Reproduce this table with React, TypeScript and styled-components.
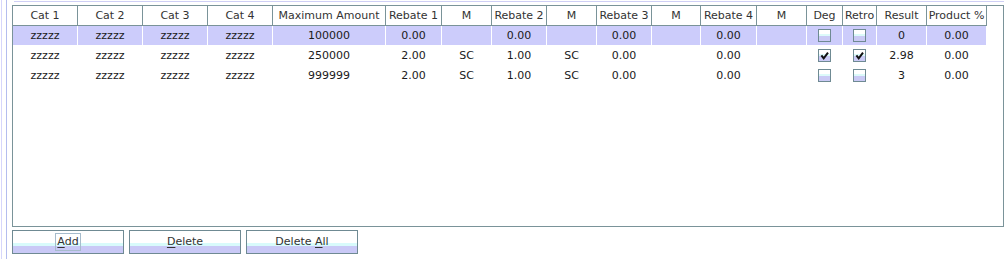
import React from 'react'
import styled, { createGlobalStyle } from 'styled-components'

const GlobalStyle = createGlobalStyle`
  html, body {
    margin: 0;
    padding: 0;
    background: #ffffff;
  }
  body {
    font-family: "DejaVu Sans", "Liberation Sans", sans-serif;
    font-size: 11px;
    color: #222;
  }
`

// 列宽（含右侧网格线）
const COLUMNS = [65, 65, 65, 65, 113, 56, 50, 55, 50, 55, 49, 56, 50, 36, 34, 50, 60]
const COLS = COLUMNS.map((w) => `${w}px`).join(' ')

const HEADERS = [
  'Cat 1', 'Cat 2', 'Cat 3', 'Cat 4', 'Maximum Amount', 'Rebate 1', 'M', 'Rebate 2', 'M',
  'Rebate 3', 'M', 'Rebate 4', 'M', 'Deg', 'Retro', 'Result', 'Product %',
]

type RowData = {
  cats: string[]
  amount: string
  rebates: [string, string][]
  deg: boolean
  retro: boolean
  result: string
  product: string
  selected?: boolean
}

const rows: RowData[] = [
  {
    cats: ['zzzzz', 'zzzzz', 'zzzzz', 'zzzzz'],
    amount: '100000',
    rebates: [['0.00', ''], ['0.00', ''], ['0.00', ''], ['0.00', '']],
    deg: false,
    retro: false,
    result: '0',
    product: '0.00',
    selected: true,
  },
  {
    cats: ['zzzzz', 'zzzzz', 'zzzzz', 'zzzzz'],
    amount: '250000',
    rebates: [['2.00', 'SC'], ['1.00', 'SC'], ['0.00', ''], ['0.00', '']],
    deg: true,
    retro: true,
    result: '2.98',
    product: '0.00',
  },
  {
    cats: ['zzzzz', 'zzzzz', 'zzzzz', 'zzzzz'],
    amount: '999999',
    rebates: [['2.00', 'SC'], ['1.00', 'SC'], ['0.00', ''], ['0.00', '']],
    deg: false,
    retro: false,
    result: '3',
    product: '0.00',
  },
]

const Frame = styled.div`
  display: flex;
  height: 100vh;
`

const Rail = styled.div`
  margin-left: 1px;
  width: 4px;
  border-left: 1px solid #d6d6fb;
  border-right: 1px solid #b4bdee;
`

const Content = styled.div`
  display: flex;
  flex-direction: column;
  padding-left: 5px;
`

const TopRule = styled.div`
  margin: 1px 0 0 2px;
  width: 990px;
  border-top: 1px solid #cfcff5;
`

const ScrollPane = styled.div`
  margin-top: 3px;
  width: 992px;
  height: 222px;
  box-sizing: border-box;
  border: 1px solid #7a9399;
  background: #fff;
  overflow: hidden;
`

const HeaderRow = styled.div`
  display: grid;
  grid-template-columns: ${COLS};
  width: max-content;
  height: 20px;
`

const HeaderCell = styled.div`
  box-sizing: border-box;
  display: flex;
  align-items: center;
  justify-content: center;
  border-right: 1px solid #7a9399;
  border-bottom: 1px solid #7a9399;
  color: #333;
  white-space: nowrap;
  overflow: hidden;
`

const Row = styled.div<{ $selected?: boolean }>`
  display: grid;
  grid-template-columns: ${COLS};
  width: max-content;
  height: 20px;
  background: ${(p) => (p.$selected ? '#ccccfb' : '#ffffff')};
`

const Cell = styled.div`
  box-sizing: border-box;
  display: flex;
  align-items: center;
  justify-content: center;
  border-right: 1px solid #ffffff;
  border-bottom: 1px solid #ffffff;
  color: #1a1a1a;
  white-space: nowrap;
`

const Box = styled.span`
  box-sizing: border-box;
  width: 13px;
  height: 13px;
  border: 1px solid #6f8a93;
  background: linear-gradient(
    to bottom,
    #ffffff 0,
    #ffffff 4px,
    #dcfafa 4px,
    #dcfafa 6px,
    #cacaf5 6px
  );
  display: flex;
  align-items: center;
  justify-content: center;
`

const ButtonBar = styled.div`
  display: flex;
  gap: 5px;
  margin-top: 3px;
`

const Button = styled.button`
  box-sizing: border-box;
  width: 112px;
  height: 24px;
  padding: 0 0 1px;
  border: 1px solid #6f8a93;
  border-radius: 0;
  background: linear-gradient(
    to bottom,
    #ffffff 0,
    #ffffff 12px,
    #d8fbfb 12px,
    #d8fbfb 15px,
    #c9c9f6 15px
  );
  font-family: "DejaVu Sans", "Liberation Sans", sans-serif;
  font-size: 11px;
  color: #333;
  display: flex;
  align-items: center;
  justify-content: center;
`

const Label = styled.span<{ $focused?: boolean }>`
  white-space: pre;
  border: 1px solid ${(p) => (p.$focused ? '#a6bccc' : 'transparent')};
  padding: 1px 1px 2px;
`

const Mnemonic = styled.span`
  text-decoration: underline;
  text-underline-offset: 2px;
`

function CheckBox({ checked }: { checked: boolean }) {
  return (
    <Box>
      {checked && (
        <svg width="11" height="11" viewBox="0 0 11 11">
          <path d="M3 6.2 L4.7 8.4 L8.4 3.4" fill="none" stroke="#111" strokeWidth="2" strokeLinecap="square" />
        </svg>
      )}
    </Box>
  )
}

function RebateTable() {
  return (
    <ScrollPane>
      <HeaderRow>
        {HEADERS.map((h, i) => (
          <HeaderCell key={i}>{h}</HeaderCell>
        ))}
      </HeaderRow>
      {rows.map((r, i) => (
        <Row key={i} $selected={r.selected}>
          {r.cats.map((c, j) => (
            <Cell key={'c' + j}>{c}</Cell>
          ))}
          <Cell>{r.amount}</Cell>
          {r.rebates.map(([v, m], j) => (
            <React.Fragment key={'r' + j}>
              <Cell>{v}</Cell>
              <Cell>{m}</Cell>
            </React.Fragment>
          ))}
          <Cell>
            <CheckBox checked={r.deg} />
          </Cell>
          <Cell>
            <CheckBox checked={r.retro} />
          </Cell>
          <Cell>{r.result}</Cell>
          <Cell>{r.product}</Cell>
        </Row>
      ))}
    </ScrollPane>
  )
}

export default function App() {
  return (
    <>
      <GlobalStyle />
      <Frame>
        <Rail />
        <Content>
          <TopRule />
          <RebateTable />
          <ButtonBar>
            <Button>
              <Label $focused>
                <Mnemonic>A</Mnemonic>dd
              </Label>
            </Button>
            <Button>
              <Label>
                <Mnemonic>D</Mnemonic>elete
              </Label>
            </Button>
            <Button>
              <Label>
                Delete <Mnemonic>A</Mnemonic>ll
              </Label>
            </Button>
          </ButtonBar>
        </Content>
      </Frame>
    </>
  )
}
